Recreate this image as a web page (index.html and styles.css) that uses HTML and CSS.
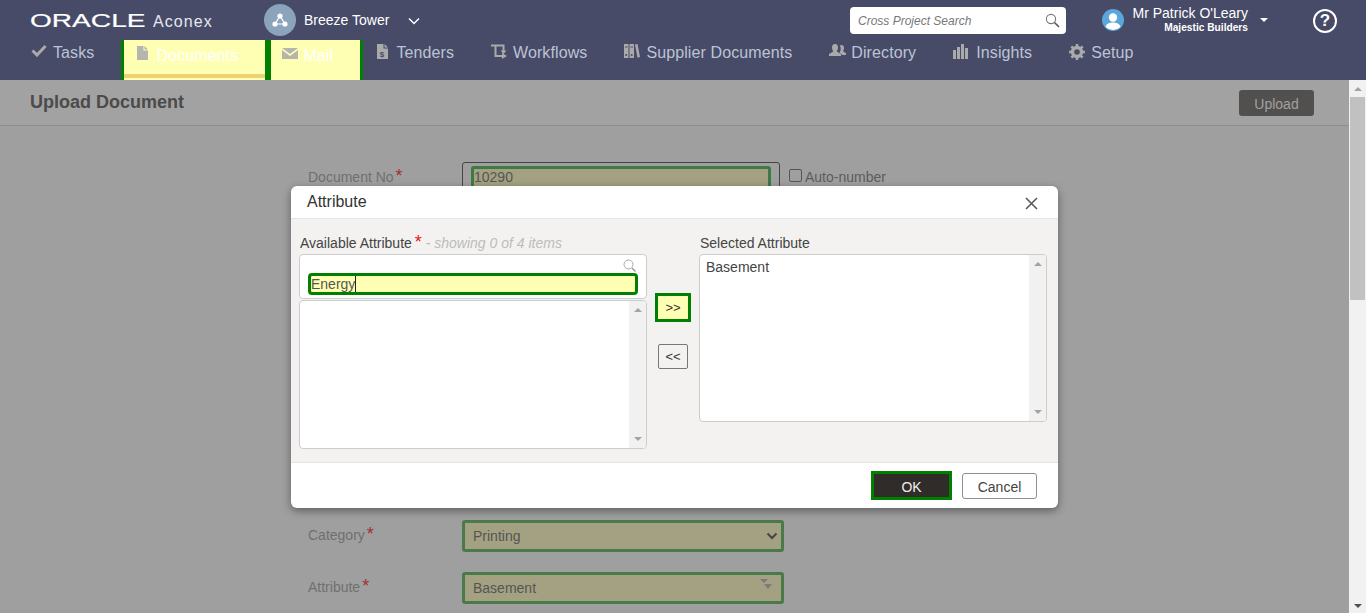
FILE: index.html
```html
<!DOCTYPE html>
<html lang="en">
<head>
  <meta charset="UTF-8">
  <title>Upload Document</title>
  <link rel="stylesheet" href="styles.css">
</head>

<body>
  <header class="topbar">
    <div class="toprow">
      <div class="logo"><span class="logo-oracle">ORACLE</span><span class="logo-aconex">Aconex</span></div>

      <div class="project">
        <span class="project-icon">
          <svg width="16" height="14" viewBox="0 0 16 14"><path d="M8 3 3 11h10z" fill="none" stroke="#fff" stroke-width="1.2"/><circle cx="8" cy="3" r="2.6" fill="#fff"/><circle cx="3" cy="11" r="2.6" fill="#fff"/><circle cx="13" cy="11" r="2.6" fill="#fff"/></svg>
        </span>
        <span class="project-name">Breeze Tower</span>
        <svg class="project-arrow" width="12" height="8" viewBox="0 0 12 8"><path d="M1 1.5 6 6.5 11 1.5" fill="none" stroke="#fff" stroke-width="1.5"/></svg>
      </div>

      <div class="search">
        <span>Cross Project Search</span>
        <svg width="15" height="15" viewBox="0 0 15 15"><circle cx="6" cy="6" r="4.6" fill="none" stroke="#777" stroke-width="1.1"/><path d="M9.5 9.5 14 14" stroke="#555" stroke-width="1.6"/></svg>
      </div>

      <div class="user">
        <svg class="avatar" width="22" height="22" viewBox="0 0 22 22"><circle cx="11" cy="11" r="11" fill="#5ba6da"/><circle cx="11" cy="8.5" r="4.2" fill="#fff"/><path d="M3.5 18c1-3.500 4-4.500 7.500-4.500s6.500 1 7.500 4.500a11 11 0 0 1-15 0z" fill="#fff"/></svg>
        <div class="user-text">
          <div class="user-name">Mr Patrick O'Leary</div>
          <div class="user-company">Majestic Builders</div>
        </div>
        <span class="user-caret"></span>
      </div>

      <div class="help">?</div>
    </div>

    <nav class="navi">
      <a class="navi-item tasks">
        <svg width="16" height="13" viewBox="0 0 16 13"><path d="M1.500 6.500 6 11 14.500 2" fill="none" stroke="#aaa" stroke-width="3"/></svg>
        Tasks
      </a>
      <a class="navi-item mark documents">
        <svg width="11" height="14" viewBox="0 0 11 14"><path d="M0 0h6.500v4.500H11V14H0zM7.500 0 11 3.500H7.500z" fill="#b5b5b0"/></svg>
        Documents
      </a>
      <a class="navi-item mark mail">
        <svg width="16" height="11" viewBox="0 0 16 11"><path d="M0 0h16L8 6zM0 2l8 6 8-6v9H0z" fill="#b5b5b0"/></svg>
        Mail
      </a>
      <a class="navi-item gap8">
        <svg width="11" height="15" viewBox="0 0 11 15"><path d="M0 0h6.500v4.500H11V15H0zM7.500 0 11 3.500H7.500z" fill="#aaa"/><text x="5" y="13" class="dollar">$</text></svg>
        Tenders
      </a>
      <a class="navi-item">
        <svg width="16" height="15" viewBox="0 0 16 15"><path d="M0 1.500h12.500V7M4.500 1.500V12H11" fill="none" stroke="#aaa" stroke-width="2"/><path d="M9.500 6.500h6l-3 3.500zM11 9l5 3-5 3z" fill="#aaa"/></svg>
        Workflows
      </a>
      <a class="navi-item">
        <svg width="16" height="14" viewBox="0 0 16 14"><path d="M0 0h4.500v14H0zM5.500 0H10v14H5.500zM11 .6l2.500-.6L16 13l-2.500.8z" fill="#aaa"/><path d="M1 3h2.500M6.500 3H9" stroke="#474b67"/><circle cx="2.200" cy="11" r="1" fill="#474b67"/><circle cx="7.700" cy="11" r="1" fill="#474b67"/></svg>
        Supplier Documents
      </a>
      <a class="navi-item gap5">
        <svg width="17" height="13" viewBox="0 0 17 13"><path d="M6 0c2 0 3 1.500 3 3.500S8 6.500 7.700 7.500L12 10v2H0v-2l4.300-2.500C4 6.500 3 5.500 3 3.500S4 0 6 0z" fill="#aaa"/><path d="M12.500 1c1.500 0 2.500 1.200 2.500 3s-.8 2.500-1 3.200l3 2V11h-3.500l-3-2.200c.6-.8 1.200-2 1.200-4 0-1.200-.3-2.400-.9-3 .4-.5 1-.8 1.700-.8z" fill="#aaa"/></svg>
        Directory
      </a>
      <a class="navi-item gap8">
        <svg width="15" height="15" viewBox="0 0 15 15"><path d="M0 6h3v9H0zM4 3h3v12H4zM8 0h3v15H8zM12 4h3v11h-3z" fill="#aaa"/></svg>
        Insights
      </a>
      <a class="navi-item">
        <svg width="16" height="16" viewBox="0 0 16 16"><circle cx="8" cy="8" r="4.500" fill="none" stroke="#aaa" stroke-width="3.400"/><path d="M8 0v16M0 8h16M2.300 2.300l11.400 11.400M13.700 2.300 2.300 13.700" stroke="#aaa" stroke-width="2.600" stroke-dasharray="3 10 3"/></svg>
        Setup
      </a>
    </nav>
  </header>

  <div class="main">
    <div class="page">
      <div class="page-head">
        <h1>Upload Document</h1>
        <button class="upload-btn" type="button">Upload</button>
      </div>

      <div class="form-row doc-row">
        <label class="form-label">Document No<span class="req">*</span></label>
        <div class="doc-box"><div class="field doc-field">10290</div></div>
        <div class="auto"><span class="check"></span>Auto-number</div>
      </div>

      <div class="form-row category-row">
        <label class="form-label">Category<span class="req">*</span></label>
        <div class="field select">
          Printing
          <svg width="12" height="8" viewBox="0 0 12 8"><path d="M1.500 1.500 6 6 10.500 1.500" fill="none" stroke="#444" stroke-width="2"/></svg>
        </div>
      </div>

      <div class="form-row">
        <label class="form-label">Attribute<span class="req">*</span></label>
        <div class="field select">
          Basement
          <svg class="updown" width="12" height="11" viewBox="0 0 12 11"><path d="M0 0h8L4 4zM4 5h8L8 10z" fill="#7b7b7b"/></svg>
        </div>
      </div>
    </div>

    <div class="scrollbar">
      <span class="arrow up"></span>
      <span class="thumb"></span>
      <span class="arrow down"></span>
    </div>

    <!-- 모달 -->
    <div class="modal">
      <div class="modal-head">
        <span class="modal-title">Attribute</span>
        <svg width="13" height="13" viewBox="0 0 13 13"><path d="M1 1l11 11M12 1 1 12" stroke="#555" stroke-width="1.500"/></svg>
      </div>

      <div class="modal-body">
        <div class="picker">
          <div class="picker-label">Available Attribute<span class="req">*</span><em> - showing 0 of 4 items</em></div>
          <div class="filter">
            <svg width="13" height="13" viewBox="0 0 13 13"><circle cx="5.500" cy="5.500" r="4.500" fill="none" stroke="#aaa"/><path d="M9 9l3.500 3.500" stroke="#999" stroke-width="1.400"/></svg>
            <div class="filter-input">Energy<span class="caret"></span></div>
          </div>
          <div class="listbox left-list">
            <div class="list-items"></div>
            <div class="list-scroll"><span class="arrow up"></span><span class="arrow down"></span></div>
          </div>
        </div>

        <div class="transfer">
          <button class="move move-on" type="button">&gt;&gt;</button>
          <button class="move" type="button">&lt;&lt;</button>
        </div>

        <div class="picker">
          <div class="picker-label">Selected Attribute</div>
          <div class="listbox right-list">
            <div class="list-items">Basement</div>
            <div class="list-scroll"><span class="arrow up"></span><span class="arrow down"></span></div>
          </div>
        </div>
      </div>

      <div class="modal-foot">
        <button class="ok-btn" type="button">OK</button>
        <button class="cancel-btn" type="button">Cancel</button>
      </div>
    </div>
  </div>
</body>
</html>
```

FILE: styles.css
```css
* {
  box-sizing: border-box;
}
html, body {
  height: 100%;
}
body {
  margin: 0;
  overflow: hidden;
  font-family: "Liberation Sans", Arial, sans-serif;
  background: #474b67;
}

/* 상단 바 */
.topbar {
  height: 80px;
  background: #474b67;
}
.toprow {
  display: flex;
  align-items: center;
  height: 40px;
  padding-left: 30px;
  color: #fff;
}
.logo {
  display: flex;
  align-items: center;
  width: 234px;
}
.logo-oracle {
  display: inline-block;
  width: 123px;
  padding-top: 1px;
  font-size: 18px;
  line-height: 20px;
  -webkit-text-stroke: 0.2px #fff;
  transform: scaleX(1.56);
  transform-origin: left center;
}
.logo-aconex {
  font-size: 16px;
  letter-spacing: 1.1px;
  color: #e8e8ee;
  padding-top: 3px;
}
.project {
  display: flex;
  align-items: center;
  width: 586px;
}
.project-icon {
  display: flex;
  align-items: center;
  justify-content: center;
  width: 32px;
  height: 32px;
  border-radius: 50%;
  background: #8ba3bb;
  margin-right: 8px;
}
.project-name {
  font-size: 14px;
}
.project-arrow {
  margin-left: 19px;
  margin-top: 2px;
}
.search {
  display: flex;
  align-items: center;
  justify-content: space-between;
  width: 216px;
  height: 27px;
  margin-top: 1px;
  padding: 0 6px 0 8px;
  background: #fff;
  border-radius: 4px;
  font-size: 12px;
  font-style: italic;
  color: #777;
}
.user {
  display: flex;
  align-items: center;
  margin-left: 36px;
}
.user-text {
  width: 117px;
  margin-left: 7px;
  text-align: right;
}
.user-name {
  font-size: 14px;
  line-height: 15px;
  margin-top: -1px;
}
.user-company {
  font-size: 10.2px;
  font-weight: bold;
  line-height: 13px;
}
.user-caret {
  width: 0;
  height: 0;
  margin-left: 12px;
  border: 4px solid transparent;
  border-top-color: #fff;
  border-bottom: 0;
}
.help {
  width: 24px;
  height: 24px;
  margin-left: 45px;
  margin-top: 2px;
  border: 2px solid #fff;
  border-radius: 50%;
  text-align: center;
  font-size: 17px;
  font-weight: bold;
  line-height: 20px;
}

/* 메뉴 */
.navi {
  display: flex;
  height: 40px;
  padding-left: 31px;
}
.navi-item {
  display: flex;
  align-items: flex-start;
  gap: 6px;
  margin-right: 37px;
  padding-top: 4px;
  font-size: 16px;
  letter-spacing: 0.1px;
  line-height: 18px;
  color: #bcc3d4;
}
.navi-item svg {
  margin-top: 0;
}
.gap8 {
  gap: 8px;
}
.gap5 {
  gap: 5px;
}
.tasks {
  margin-right: 27px;
}
.mark {
  margin-right: 0;
  padding-top: 7px;
  height: 40px;
  background: #ffffb3;
  border-left: 3px solid #008000;
  border-right: 3px solid #008000;
  color: #fff;
}
.documents {
  width: 147px;
  padding-left: 13px;
  gap: 8px;
  box-shadow: inset 0 -2px 0 #ffffb3, inset 0 -6px 0 #efd072;
}
.documents svg {
  margin-top: -1px;
}
.mail {
  width: 95px;
  margin-right: 14px;
  padding-left: 11px;
  gap: 5px;
}
.mail svg {
  margin-top: 1px;
}
.dollar {
  font-size: 8px;
  font-weight: bold;
  fill: #474b67;
  text-anchor: middle;
}

/* 본문 */
.main {
  position: relative;
  display: flex;
  height: 533px;
  overflow: hidden;
}
.page {
  flex: 1;
  background: #9f9f9f;
}
.page-head {
  display: flex;
  align-items: center;
  justify-content: space-between;
  height: 46px;
  padding: 0 35px 0 30px;
  background: #a2a2a2;
  border-bottom: 1px solid #8d8d8d;
}
.page-head h1 {
  margin: 0 0 1px;
  font-size: 18px;
  color: #4b4b4b;
}
.upload-btn {
  width: 75px;
  height: 26px;
  margin-top: 1px;
  padding: 2px 0 0;
  border: 0;
  border-radius: 3px;
  background: #52504e;
  color: #a0a0a0;
  font: 14px "Liberation Sans", Arial, sans-serif;
}
.form-row {
  display: flex;
  align-items: center;
  padding-left: 308px;
}
.form-label {
  width: 154px;
  font-size: 14px;
  color: #6f6f6f;
  padding-bottom: 3px;
}
.req {
  margin-left: 2px;
  font-size: 18px;
  line-height: 10px;
  color: #a33030;
}
.doc-row {
  align-items: flex-start;
  margin-top: 36px;
}
.doc-row .form-label {
  padding-top: 7px;
}
.doc-box {
  width: 318px;
  height: 40px;
  padding: 3px 8px;
  border: 1px solid #454545;
  border-radius: 3px;
}
.field {
  height: 32px;
  border: 3px solid #4a7a4a;
  border-radius: 3px;
  background: #a3a181;
  font-size: 14px;
  color: #555;
}
.doc-field {
  height: 30px;
  padding: 0;
  border-color: #3d7a44;
}
.auto {
  display: flex;
  align-items: flex-start;
  margin-left: 9px;
  padding-top: 7px;
  font-size: 14px;
  color: #5c5c5c;
}
.check {
  width: 13px;
  height: 13px;
  margin: 0 3px 0 0;
  border: 1px solid #555;
  border-radius: 2px;
}
.category-row {
  margin-top: 318px;
  margin-bottom: 20px;
}
.select {
  display: flex;
  align-items: center;
  justify-content: space-between;
  width: 322px;
  padding: 0 3px 0 8px;
}
.updown {
  margin: -8px 6px 0 0;
}

/* 스크롤바 */
.scrollbar {
  display: flex;
  flex-direction: column;
  align-items: center;
  width: 17px;
  background: #f1f1f1;
}
.thumb {
  width: 15px;
  height: 203px;
  margin-top: 6px;
  margin-bottom: auto;
  background: #c1c1c1;
}
.arrow {
  width: 0;
  height: 0;
  border: 4px solid transparent;
}
.arrow.up {
  border-top: 0;
  border-bottom: 4px solid #a3a3a3;
}
.arrow.down {
  border-bottom: 0;
  border-top: 4px solid #505050;
}
.scrollbar .arrow.up {
  margin-top: 7px;
}
.scrollbar .arrow.down {
  margin-bottom: 5px;
}

/* 모달 */
.modal {
  position: absolute;
  left: 291px;
  top: 106px;
  width: 767px;
  height: 322px;
  background: #fff;
  border-radius: 6px;
  box-shadow: 0 3px 9px rgba(0, 0, 0, 0.4);
  overflow: hidden;
}
.modal-head {
  display: flex;
  align-items: center;
  justify-content: space-between;
  height: 33px;
  padding: 0 20px 0 16px;
  border-bottom: 1px solid #e5e5e5;
}
.modal-head svg {
  margin-top: 3px;
}
.modal-title {
  font-size: 16px;
  color: #333;
}
.modal-body {
  display: flex;
  height: 243px;
  padding: 17px 11px 0 8px;
  background: #f3f2f0;
}
.picker {
  width: 348px;
}
.picker-label {
  height: 18px;
  padding-left: 1px;
  font-size: 14px;
  line-height: 15px;
  color: #444;
  white-space: nowrap;
}
.picker-label em {
  color: #bcbcbc;
}
.picker-label .req {
  margin-left: 3px;
  color: #e01818;
}
.filter {
  height: 45px;
  padding: 4px 8px 0 8px;
  background: #fff;
  border: 1px solid #ccc;
  border-radius: 4px;
  text-align: right;
}
.filter svg {
  display: block;
  margin: 0 2px 0 auto;
}
.filter-input {
  display: flex;
  align-items: center;
  height: 22px;
  margin-top: 1px;
  padding-left: 0;
  background: #ffffb3;
  border: 3px solid #008000;
  border-radius: 4px;
  font-size: 14px;
  color: #555;
  text-align: left;
}
.caret {
  width: 1px;
  height: 16px;
  background: #222;
}
.listbox {
  display: flex;
  background: #fff;
  border: 1px solid #ccc;
  border-radius: 4px;
  overflow: hidden;
}
.left-list {
  height: 149px;
  margin-top: 1px;
}
.right-list {
  height: 168px;
}
.list-items {
  flex: 1;
  padding: 4px 6px;
  font-size: 14px;
  line-height: 16px;
  color: #444;
}
.list-scroll {
  display: flex;
  flex-direction: column;
  align-items: center;
  justify-content: space-between;
  width: 17px;
  padding: 7px 0 7px;
  background: #f1f1f1;
}
.list-scroll .arrow.down {
  border-top-color: #a3a3a3;
}
.transfer {
  display: flex;
  flex-direction: column;
  align-items: center;
  gap: 22px;
  width: 52px;
  padding-top: 57px;
}
.move {
  width: 30px;
  height: 25px;
  padding: 0;
  background: #f3f2f0;
  border: 1px solid #777;
  border-radius: 2px;
  font: 13px "Liberation Sans", Arial, sans-serif;
  color: #333;
}
.move-on {
  width: 36px;
  height: 29px;
  background: #ffffb3;
  border: 3px solid #008000;
  border-radius: 0;
}
.modal-foot {
  display: flex;
  align-items: center;
  justify-content: flex-end;
  gap: 10px;
  height: 46px;
  padding-right: 21px;
  border-top: 1px solid #e5e5e5;
}
.ok-btn {
  width: 81px;
  height: 29px;
  padding: 2px 0 0;
  background: #302c2a;
  border: 3px solid #008000;
  color: #eee;
  font: 14px "Liberation Sans", Arial, sans-serif;
}
.cancel-btn {
  width: 75px;
  height: 26px;
  padding: 2px 0 0;
  background: #fff;
  border: 1px solid #8f8f8f;
  border-radius: 3px;
  color: #444;
  font: 14px "Liberation Sans", Arial, sans-serif;
}
```
